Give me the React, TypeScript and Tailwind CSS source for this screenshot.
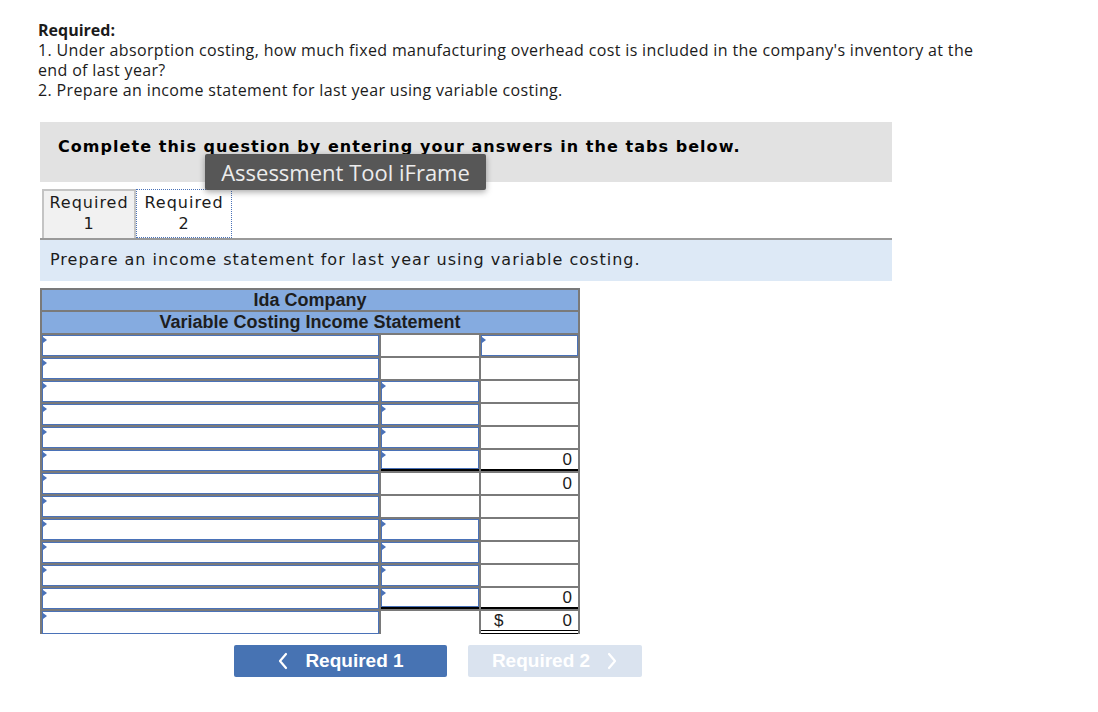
import React from "react";

type C2 = "input" | "empty" | "inputLine";
type C3 = "input" | "empty" | "zero" | "zeroLine" | "total";

const rows: [C2, C3][] = [
  ["empty", "input"],
  ["empty", "empty"],
  ["input", "empty"],
  ["input", "empty"],
  ["input", "empty"],
  ["inputLine", "zeroLine"],
  ["empty", "zero"],
  ["empty", "empty"],
  ["input", "empty"],
  ["input", "empty"],
  ["input", "empty"],
  ["inputLine", "zeroLine"],
  ["empty", "total"],
];

function InputBox() {
  return (
    <div className="relative h-full w-full bg-white border border-[#4a72b8]">
      <span className="absolute left-0 top-[1px] w-0 h-0 border-l-[4px] border-l-[#4a72b8] border-y-[3px] border-y-transparent" />
    </div>
  );
}

function Col2({ kind }: { kind: C2 }) {
  if (kind === "empty") return <div className="bg-white" />;
  return (
    <div className={kind === "inputLine" ? "bg-white border-b-2 border-black" : "bg-white"}>
      <InputBox />
    </div>
  );
}

function Col3({ kind }: { kind: C3 }) {
  if (kind === "input") return <div className="bg-white"><InputBox /></div>;
  if (kind === "empty") return <div className="bg-white" />;
  if (kind === "total")
    return (
      <div className="bg-white flex justify-between items-center pl-[13px] pr-[6px] text-[17px] leading-[19px] border-b-[4px] border-double border-black">
        <span>$</span>
        <span>0</span>
      </div>
    );
  return (
    <div
      className={
        kind === "zeroLine"
          ? "bg-white text-right pr-[6px] text-[17px] leading-[19px] border-b-2 border-black"
          : "bg-white text-right pr-[6px] text-[17px] leading-[21px]"
      }
    >
      0
    </div>
  );
}

export default function App() {
  return (
    <div className="w-[1098px] h-[712px] bg-white text-[#1b1b1b] font-['Liberation_Sans',Arial,sans-serif]">
      <div className="pl-[38px] pt-[20px] w-[998px] font-['Open_Sans',Arial,sans-serif] text-[16px] tracking-[0.35px] leading-[20px]">
        <p className="font-bold tracking-normal">Required:</p>
        <p>1. Under absorption costing, how much fixed manufacturing overhead cost is included in the company's inventory at the end of last year?</p>
        <p>2. Prepare an income statement for last year using variable costing.</p>
      </div>

      <div className="ml-[40px] w-[852px] mt-[22px]">
        <div className="relative h-[60px] bg-[#e2e2e2] pl-[18px] pt-[15px] font-['DejaVu_Sans',Verdana,sans-serif] font-bold text-[16px] tracking-[1.05px] leading-[20px] text-black">
          Complete this question by entering your answers in the tabs below.
          <div className="absolute left-[165px] top-[32px] w-[281px] h-[36px] bg-[#575757] rounded-[2px] shadow-[0_2px_6px_rgba(0,0,0,0.35)] flex items-center justify-center font-['Open_Sans',Arial,sans-serif] font-normal tracking-normal text-[22px] text-[#ececec]">
            Assessment Tool iFrame
          </div>
        </div>

        <div className="flex mt-[7px] pl-[2px] h-[49px] font-['DejaVu_Sans',Verdana,sans-serif] text-[16px] tracking-[1px] leading-[21px] text-[#1b1b1b]">
          <div className="w-[94px] h-full bg-[#f1f1f1] border-2 border-b-0 border-[#c4c4c4] text-center pt-[1px]">
            Required
            <br />1
          </div>
          <div className="w-[96px] h-full bg-white border border-dotted border-[#4a72b8] text-center pt-[2px]">
            Required
            <br />2
          </div>
        </div>

        <div className="h-[43px] bg-[#dde9f6] border-t-2 border-[#9a9a9a] pl-[10px] pt-[10px] font-['DejaVu_Sans',Verdana,sans-serif] text-[16px] tracking-[1px] leading-[20px] text-[#1b1b1b]">
          Prepare an income statement for last year using variable costing.
        </div>

        <div className="mt-[7px] w-[540px] bg-[#7a7a7a] p-[2px] flex flex-col gap-[2px]">
          <div className="h-[20px] bg-[#85abe0] text-center font-bold text-[18px] leading-[20px] text-[#1e1e1e]">Ida Company</div>
          <div className="h-[21px] bg-[#85abe0] text-center font-bold text-[18px] leading-[21px] text-[#1e1e1e]">Variable Costing Income Statement</div>
          {rows.map(([c2, c3], i) => (
            <div key={i} className="grid grid-cols-[337px_98px_97px] gap-x-[2px] h-[21px]">
              <div className="bg-white"><InputBox /></div>
              <Col2 kind={c2} />
              <Col3 kind={c3} />
            </div>
          ))}
        </div>

        <div className="flex gap-[21px] mt-[11px] ml-[194px]">
          <div className="w-[213px] h-[32px] bg-[#4773b3] rounded-[2px] flex items-center justify-center gap-[16px] text-white font-bold text-[19px]">
            <svg width="12" height="18" viewBox="0 0 12 18" fill="none" stroke="white" strokeWidth="2.2" strokeLinecap="round" strokeLinejoin="round">
              <polyline points="9,2 3,9 9,16" />
            </svg>
            <span>Required 1</span>
          </div>
          <div className="w-[174px] h-[32px] bg-[#dae3ef] rounded-[2px] flex items-center justify-center gap-[16px] text-white font-bold text-[19px]">
            <span>Required 2</span>
            <svg width="12" height="18" viewBox="0 0 12 18" fill="none" stroke="white" strokeWidth="2.2" strokeLinecap="round" strokeLinejoin="round">
              <polyline points="3,2 9,9 3,16" />
            </svg>
          </div>
        </div>
      </div>
    </div>
  );
}
